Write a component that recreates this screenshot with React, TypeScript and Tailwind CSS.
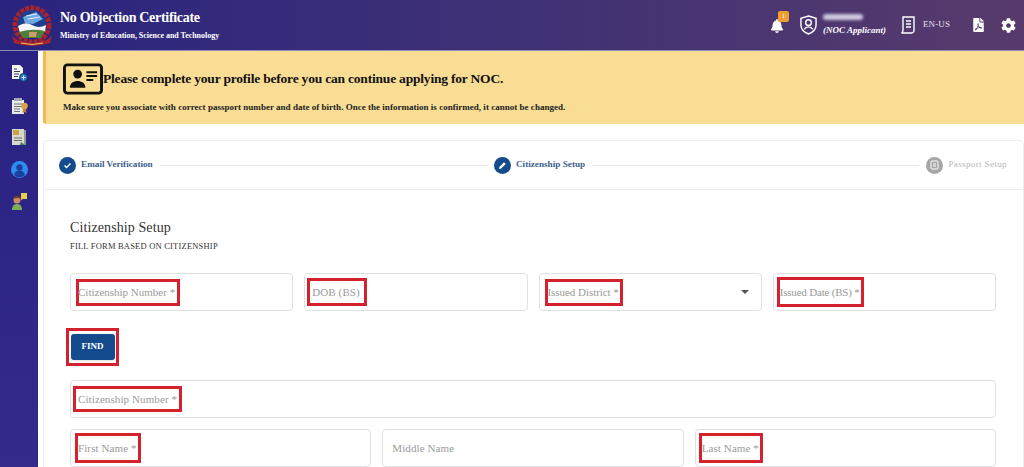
import { FaBell, FaCog, FaFilePdf } from "react-icons/fa";

const serif = "font-['Liberation_Serif',serif]";

function Emblem() {
  return (
    <svg width="46" height="44" viewBox="0 0 46 44">
      <path d="M23 1 L25 8 L21 8 Z" fill="#b3262c" />
      <circle cx="23" cy="22" r="17" fill="none" stroke="#a8242b" strokeWidth="5" strokeDasharray="4 1.200" />
      <circle cx="23" cy="21" r="14" fill="#1d3f8f" />
      <path d="M14 14 L27 9 L34 16 L24 21 L16 20 Z" fill="#6fa8de" />
      <path d="M17 13 L28 11 M19 16 L31 14" stroke="#e3eefa" strokeWidth="1" />
      <path d="M9 23 Q17 18 23 22 Q30 26 37 22 L36 29 L11 30 Z" fill="#f5f5f5" />
      <path d="M10 29 Q23 25 36 28 L32 35 L14 35 Z" fill="#4d7f3c" />
      <path d="M20 29 L28 29 L27 34 L20 34 Z" fill="#c9a06b" />
      <path d="M3 32 Q6 37 12 38 Q23 42 34 38 Q40 37 43 32 L41 40 Q23 46 5 40 Z" fill="#a8242b" />
      <path d="M12 40 Q23 43 34 40" stroke="#e9c46a" strokeWidth="1" fill="none" />
    </svg>
  );
}

function Sidebar() {
  return (
    <aside className="w-[38px] shrink-0 bg-gradient-to-b from-[#2a2283] to-[#332a8c] flex flex-col items-center pt-[14px] gap-[15px]">
      <svg width="17" height="17" viewBox="0 0 17 17">
        <path d="M1 0h8l3 3v11H1z" fill="#f3f4f6" />
        <path d="M3 4h3M3 6.500h6M3 9h5M3 11.500h4" stroke="#374151" strokeWidth="1" />
        <circle cx="12.500" cy="12.500" r="4" fill="#2a7bd0" stroke="#12305f" />
        <path d="M10.500 12.500h4M12.500 10.500v4" stroke="#dbeafe" strokeWidth="1" />
      </svg>
      <svg width="17" height="17" viewBox="0 0 17 17">
        <path d="M1 3h12v14H1z" fill="#e8eaec" />
        <path d="M3 1h8v3H3z" fill="#a3a8b0" />
        <path d="M3 7h8M3 9.500h8M3 12h6M3 14.500h6" stroke="#6b7280" strokeWidth="1" />
        <circle cx="13.500" cy="9" r="3.300" fill="#d9a441" />
        <path d="M12 12l-.5 4 2-1 2 1-.5-4" fill="#b9822f" />
      </svg>
      <svg width="16" height="17" viewBox="0 0 16 17">
        <path d="M3 1h12v15H3z" fill="#8f9a90" />
        <path d="M1 0h12v16H1z" fill="#d7d8cf" />
        <path d="M2 1h6v5H2z" fill="#c9a544" />
        <path d="M3 9h8M3 11.500h8" stroke="#6d7466" strokeWidth="1" />
        <path d="M10 13l4 3h-5z" fill="#3f7d54" />
      </svg>
      <svg width="17" height="17" viewBox="0 0 17 17">
        <circle cx="8.500" cy="8.500" r="8.500" fill="#2f8cf0" />
        <circle cx="8.500" cy="6.500" r="3.200" fill="#1b3f9e" />
        <path d="M3 14c1-3.400 3-4.500 5.500-4.500S13 10.600 14 14a8 8 0 0 1-11 0z" fill="#1b3f9e" />
      </svg>
      <svg width="18" height="17" viewBox="0 0 18 17">
        <circle cx="7" cy="7" r="3.500" fill="#c98d6b" />
        <path d="M3 6c0-4 8-4 8 0-3-1.500-5-1.500-8 0z" fill="#7b3a2d" />
        <path d="M2 17c0-4 2-6 5-6s5 2 5 6z" fill="#7fae5a" />
        <path d="M11 0h6v6h-4l-2 1z" fill="#e5d04b" />
      </svg>
    </aside>
  );
}

function Mark({ children, className }: { children: React.ReactNode; className: string }) {
  return (
    <span className={`border-[3px] border-[#d3222d] flex items-center whitespace-nowrap text-[11px] tracking-[0.1px] text-[#9a9a9a] ${className}`}>
      {children}
    </span>
  );
}

function Field({ className, children }: { className: string; children?: React.ReactNode }) {
  return (
    <div className={`h-[38px] border border-[#dfe1e5] rounded-[4px] bg-white flex items-center justify-between ${className}`}>
      {children}
    </div>
  );
}

function StepLine() {
  return <div className="flex-1 h-px bg-[#e6e8ec] mx-[7px]" />;
}

export default function App() {
  return (
    <div className={`w-[1024px] h-[467px] overflow-hidden bg-white flex flex-col ${serif}`}>
      <header className="h-[51px] shrink-0 bg-gradient-to-r from-[#29237f] to-[#573a6b] border-b border-[#8f8cb8] flex items-center text-white">
        <div className="ml-[9px] w-[46px] h-[44px]"><Emblem /></div>
        <div className="ml-[5px] flex flex-col">
          <div className="text-[14px] leading-[18px] font-bold tracking-[-0.3px] whitespace-nowrap">No Objection Certificate</div>
          <div className="text-[8px] leading-[12px] mt-[3px] font-bold tracking-[-0.03px] whitespace-nowrap">Ministry of Education, Science and Technology</div>
        </div>
        <div className="ml-auto flex items-center">
          <div className="relative w-[13px] h-[16px]">
            <FaBell size={14} color="white" className="mt-[2px]" />
            <span className="absolute -top-[6px] left-[8px] w-[11px] h-[11px] rounded-[2px] bg-[#f0a030] text-[7px] leading-[11px] text-center">1</span>
          </div>
          <svg className="ml-[17px]" width="17" height="20" viewBox="0 0 18 21" fill="none" stroke="white" strokeWidth="1.500">
            <path d="M9 1l8 2.500v7c0 5-4 8-8 9.500-4-1.500-8-4.500-8-9.500v-7z" />
            <circle cx="9" cy="8" r="3" />
            <path d="M4.500 15c1.200-1.800 2.700-2.500 4.500-2.500s3.300.7 4.500 2.500" />
          </svg>
          <div className="ml-[6px] w-[65px] flex flex-col">
            <span className="h-[6px] w-[40px] rounded-sm bg-[#cfc9e0] blur-[1.500px]" />
            <span className="text-[9px] leading-[12px] mt-[4px] italic font-bold whitespace-nowrap">(NOC Applicant)</span>
          </div>
          <svg className="ml-[12px]" width="15" height="18" viewBox="0 0 15 18" fill="none" stroke="white" strokeWidth="1.400">
            <path d="M3 1h11v13a2.500 2.500 0 0 1-2.500 3H1.500c1.500-.5 1.500-1.500 1.500-3z" />
            <path d="M6 5h5M6 8h5M6 11h5" />
          </svg>
          <span className="ml-[8px] w-[49px] text-[9px] text-[#e6e1ee] tracking-[0.1px]">EN-US</span>
          <FaFilePdf size={14} color="white" className="w-[13px]" />
          <FaCog size={15} color="white" className="ml-[16px] mr-[8px]" />
        </div>
      </header>
      <div className="flex flex-1 min-h-0">
        <Sidebar />
        <main className="flex-1 min-w-0 pl-[5px]">
          <section className="h-[73px] bg-[#f9dd95] border-l-[3px] border-[#f0bc4e] pl-[17px] pt-[12px] rounded-bl-[3px]">
            <div className="flex items-center h-[32px]">
              <svg width="40" height="32" viewBox="0 0 41 32" fill="none">
                <rect x="1.500" y="1.500" width="38" height="29" rx="3" stroke="#111" strokeWidth="3" />
                <circle cx="15" cy="11" r="4.500" fill="#111" />
                <path d="M7 25c0-5 4-7 8-7s8 2 8 7z" fill="#111" />
                <path d="M24 9h11M24 13h11M24 17h7" stroke="#111" strokeWidth="2" />
              </svg>
              <h1 className="text-[13.500px] font-bold text-[#111] tracking-[-0.2px] whitespace-nowrap">Please complete your profile before you can continue applying for NOC.</h1>
            </div>
            <p className="mt-[6px] text-[9px] leading-[12px] font-bold text-[#222] whitespace-nowrap tracking-[0.02px]">Make sure you associate with correct passport number and date of birth. Once the information is confirmed, it cannot be changed.</p>
          </section>
          <section className="mt-[16px] border border-[#eceef1] rounded-t-[4px] h-[400px]">
            <div className="h-[49px] border-b border-[#eceef1] flex items-center pl-[15px] pr-[16px] text-[9.200px] font-bold">
              <span className="w-[17px] h-[17px] rounded-full bg-[#134b8c] flex items-center justify-center">
                <svg width="9" height="9" viewBox="0 0 9 9" fill="none" stroke="white" strokeWidth="1.400"><path d="M1.500 4.500l2 2 4-4" /></svg>
              </span>
              <span className="ml-[5px] text-[#3c5f8e] whitespace-nowrap">Email Verification</span>
              <StepLine />
              <span className="w-[17px] h-[17px] rounded-full bg-[#134b8c] flex items-center justify-center">
                <svg width="9" height="9" viewBox="0 0 9 9" fill="white"><path d="M1 8l.5-2.200L6 1.300 7.700 3 3.200 7.500z" /></svg>
              </span>
              <span className="ml-[5px] text-[#3c5f8e] whitespace-nowrap">Citizenship Setup</span>
              <StepLine />
              <span className="w-[17px] h-[17px] rounded-full bg-[#a6a6a6] flex items-center justify-center">
                <svg width="9" height="10" viewBox="0 0 9 10" fill="none" stroke="white" strokeWidth="1"><rect x="1" y="1" width="7" height="8" rx="1" /><path d="M3 4h3M3 6h3" /></svg>
              </span>
              <span className="ml-[5px] text-[#b9b9b9] font-normal tracking-[0.3px] whitespace-nowrap">Passport Setup</span>
            </div>
            <div className="pl-[26px] pr-[27px]">
              <h2 className="mt-[30px] text-[14px] leading-[16px] text-[#333] tracking-[0.1px]">Citizenship Setup</h2>
              <p className="mt-[5px] text-[8.500px] leading-[10px] text-[#333] tracking-[0.2px]">FILL FORM BASED ON CITIZENSHIP</p>
              <div className="mt-[22px] grid grid-cols-4 gap-x-[11px]">
                <Field className="pl-[5px]"><Mark className="w-[104px] h-[27px]"><span className="-ml-[1px] tracking-[0px]">Citizenship Number *</span></Mark></Field>
                <Field className="pl-[2px]"><Mark className="w-[60px] h-[28px] pl-[2px]">DOB (BS)</Mark></Field>
                <Field className="pl-[5px] pr-[12px]">
                  <Mark className="w-[78px] h-[27px]"><span className="tracking-[-0.05px]">Issued District *</span></Mark>
                  <svg width="8" height="4" viewBox="0 0 8 4"><path d="M0 0h8L4 4z" fill="#555" /></svg>
                </Field>
                <Field className="pl-[3px]"><Mark className="w-[87px] h-[30px]"><span className="tracking-[-0.2px]">Issued Date (BS) *</span></Mark></Field>
              </div>
              <div className="mt-[17px] -ml-[4px] w-[53px] h-[38px] border-[3px] border-[#d3222d] flex items-center justify-center">
                <button className="w-[44px] h-[26px] rounded-[3px] bg-[#134b8c] text-white text-[9px] font-bold shadow-sm">FIND</button>
              </div>
              <div className="mt-[14px]">
                <Field className="pl-[2px]"><Mark className="w-[109px] h-[26px] pl-[2px]">Citizenship Number *</Mark></Field>
              </div>
              <div className="mt-[11px] grid grid-cols-3 gap-x-[11px]">
                <Field className="pl-[4px]"><Mark className="w-[66px] h-[30px]">First Name *</Mark></Field>
                <Field className="pl-[9px]"><span className="text-[11px] text-[#9a9a9a] tracking-[0.1px]">Middle Name</span></Field>
                <Field className="pl-[3px]"><Mark className="w-[64px] h-[30px]">Last Name *</Mark></Field>
              </div>
            </div>
          </section>
        </main>
      </div>
    </div>
  );
}
